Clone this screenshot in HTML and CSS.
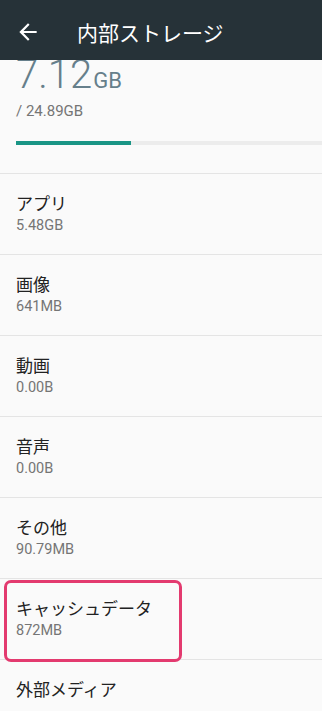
FILE: index.html
```html
<!DOCTYPE html>
<html lang="ja">
<head>
    <meta charset="UTF-8">
    <meta name="viewport" content="width=device-width, initial-scale=1.0">
    <title>内部ストレージ</title>
    <link rel="stylesheet" href="styles.css">
</head>
<body>
    <div class="toolbar">
        <svg class="back" viewBox="0 0 24 24" width="26" height="26">
            <path d="M20 11H7.83l5.59-5.59L12 4l-8 8 8 8 1.41-1.41L7.83 13H20v-2z" fill="#fff"/>
        </svg>
        <h1 class="title">内部ストレージ</h1>
    </div>
    <div class="summary">
        <div class="used">7.12<span class="unit">GB</span></div>
        <div class="total">/ 24.89GB</div>
        <div class="bar"><div class="fill" style="width: 37.6%"></div></div>
    </div>
    <div class="list">
        <div class="row">
            <div class="row-title">アプリ</div>
            <div class="row-sub">5.48GB</div>
        </div>
        <div class="row">
            <div class="row-title">画像</div>
            <div class="row-sub">641MB</div>
        </div>
        <div class="row">
            <div class="row-title">動画</div>
            <div class="row-sub">0.00B</div>
        </div>
        <div class="row">
            <div class="row-title">音声</div>
            <div class="row-sub">0.00B</div>
        </div>
        <div class="row">
            <div class="row-title">その他</div>
            <div class="row-sub">90.79MB</div>
        </div>
        <div class="row marked">
            <div class="row-title">キャッシュデータ</div>
            <div class="row-sub">872MB</div>
        </div>
        <div class="row last">
            <div class="row-title">外部メディア</div>
        </div>
    </div>
</body>
</html>
```

FILE: styles.css
```css
body {
    margin: 0;
    height: 711px;
    background-color: #fafafa;
    font-family: Roboto, "Noto Sans CJK JP", sans-serif;
    overflow: hidden;
}
.toolbar {
    position: relative;
    z-index: 2;
    display: flex;
    align-items: center;
    height: 57px;
    padding-top: 3px;
    background-color: #263238;
}
.back {
    margin-left: 15px;
    flex-shrink: 0;
}
.title {
    margin: 0 0 0 36px;
    font-size: 21px;
    font-weight: 400;
    color: #fff;
}
.summary {
    margin-top: -5px;
    padding: 0 0 28px 16px;
    border-bottom: 1px solid #e4e4e4;
}
.used {
    font-size: 40px;
    font-weight: 300;
    line-height: 40px;
    color: #667f8b;
}
.unit {
    font-size: 22px;
    font-weight: 400;
    line-height: 1;
    margin-left: 1px;
}
.total {
    margin-top: 6px;
    font-size: 15px;
    line-height: 20px;
    color: #757575;
}
.bar {
    margin-top: 20px;
    height: 4px;
    background-color: #ececec;
}
.fill {
    height: 100%;
    background-color: #1a9585;
}
.row {
    position: relative;
    padding: 18px 16px;
    border-bottom: 1px solid #e4e4e4;
}
.row.last {
    border-bottom: none;
}
.row-title {
    font-size: 17px;
    line-height: 24px;
    color: #222;
}
.row-sub {
    font-size: 14.5px;
    line-height: 20px;
    color: #757575;
}
.row.marked::after {
    content: "";
    position: absolute;
    left: 4px;
    top: 1px;
    width: 178px;
    height: 82px;
    box-sizing: border-box;
    border: 3px solid #e33a6f;
    border-radius: 7px;
}
```
